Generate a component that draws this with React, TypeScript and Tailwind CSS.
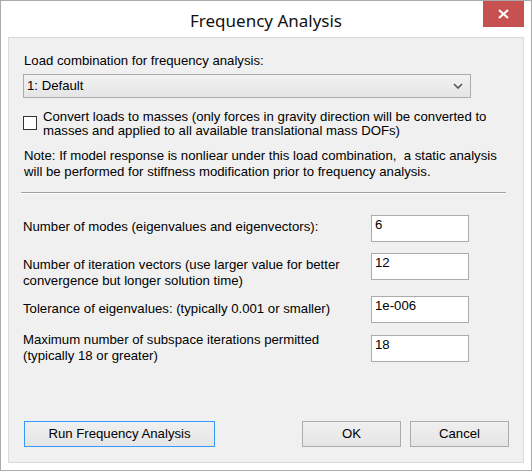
export default function App() {
  return (
    <div className="w-[532px] h-[471px] border border-[#ababab] bg-white flex flex-col text-[13.2px] text-black font-['Liberation_Sans',Arial,sans-serif] leading-[16px]">
      <div className="relative h-[36px] shrink-0 flex justify-center items-center">
        <span className="font-['Noto_Sans',sans-serif] text-[17px] text-[#111] pt-[3px]">Frequency Analysis</span>
        <div className="absolute top-0 right-[7px] w-[41px] h-[26px] bg-[#c75050] flex items-center justify-center">
          <svg width="11" height="10" viewBox="0 0 11 10">
            <path d="M1 1 L10 9 M10 1 L1 9" stroke="white" strokeWidth="2.2" />
          </svg>
        </div>
      </div>
      <div className="flex-1 mx-[7px] mb-[7px] border border-[#d9d9d9] bg-[#f0f0f0] flex flex-col pl-[14px] pr-[14px] pt-[15px] pb-[15px]">
        <div className="ml-[1px] whitespace-nowrap">Load combination for frequency analysis:</div>
        <div className="mt-[5px] w-[448px] h-[24px] border border-[#acacac] bg-gradient-to-b from-[#f2f2f2] to-[#e5e5e5] flex items-center justify-between pl-[3px] pr-[7px]">
          <span>1: Default</span>
          <svg width="10" height="6" viewBox="0 0 10 6">
            <path d="M1 1 L5 5 L9 1" stroke="#555" strokeWidth="1.6" fill="none" />
          </svg>
        </div>
        <div className="mt-[12px] flex items-start">
          <div className="mt-[6px] w-[14px] h-[14px] border border-[#333] bg-white shrink-0" />
          <div className="ml-[6px] leading-[14px] whitespace-nowrap">
            Convert loads to masses (only forces in gravity direction will be converted to
            <br />
            masses and applied to all available translational mass DOFs)
          </div>
        </div>
        <div className="mt-[10px] ml-[1px] whitespace-pre">
          {"Note: If model response is nonliear under this load combination,  a static analysis"}
          <br />
          will be performed for stiffness modification prior to frequency analysis.
        </div>
        <div className="mt-[12px] -ml-[2px] w-[485px] border-t border-[#a0a0a0] border-b border-b-white" />
        <div className="mt-[21px] flex items-start">
          <div className="w-[348px] pt-[4px] whitespace-nowrap">Number of modes (eigenvalues and eigenvectors):</div>
          <div className="w-[98px] h-[27px] border border-[#acacac] bg-white pl-[3px] pt-[1px]">6</div>
        </div>
        <div className="mt-[11px] flex items-start">
          <div className="w-[348px] pt-[4px] whitespace-nowrap">
            Number of iteration vectors (use larger value for better
            <br />
            convergence but longer solution time)
          </div>
          <div className="w-[98px] h-[27px] border border-[#acacac] bg-white pl-[3px] pt-[1px]">12</div>
        </div>
        <div className="mt-[7px] flex items-start">
          <div className="w-[348px] pt-[5px] whitespace-nowrap">Tolerance of eigenvalues: (typically 0.001 or smaller)</div>
          <div className="w-[98px] h-[27px] border border-[#acacac] bg-white pl-[3px] pt-[1px]">1e-006</div>
        </div>
        <div className="mt-[12px] flex items-start">
          <div className="w-[348px] -mt-[3px] whitespace-nowrap">
            Maximum number of subspace iterations permitted
            <br />
            (typically 18 or greater)
          </div>
          <div className="w-[98px] h-[27px] border border-[#acacac] bg-white pl-[3px] pt-[1px]">18</div>
        </div>
        <div className="mt-auto flex items-center">
          <div className="ml-[1px] w-[191px] h-[26px] border border-[#3399ff] bg-gradient-to-b from-[#f0f0f0] to-[#e5e5e5] flex items-center justify-center">
            Run Frequency Analysis
          </div>
          <div className="ml-auto w-[99px] h-[26px] border border-[#acacac] bg-gradient-to-b from-[#f0f0f0] to-[#e5e5e5] flex items-center justify-center">
            OK
          </div>
          <div className="ml-[9px] w-[99px] h-[26px] border border-[#acacac] bg-gradient-to-b from-[#f0f0f0] to-[#e5e5e5] flex items-center justify-center">
            Cancel
          </div>
        </div>
      </div>
    </div>
  );
}
